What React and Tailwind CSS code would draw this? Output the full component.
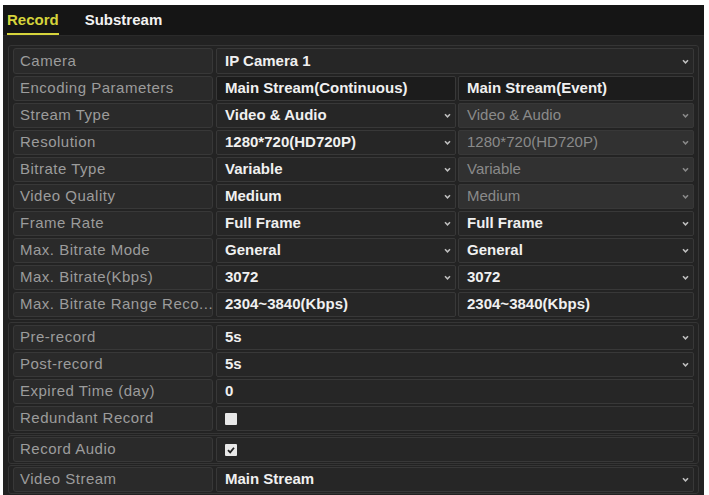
const Chevron = ({ dim }) => (
  <svg width="7" height="5" viewBox="0 0 7 5" className="shrink-0">
    <path d="M1 1.2 L3.5 3.8 L6 1.2" fill="none" stroke={dim ? "#8a8a8a" : "#c0c0c0"} strokeWidth="1.5" />
  </svg>
);

const Label = ({ children }) => (
  <div className="w-[200px] shrink-0 h-full flex items-center px-[6px] bg-[#2a2a2a] border border-[#383838] rounded-[3px] text-[15px] tracking-[0.5px] text-[#9c9c9c] whitespace-nowrap overflow-hidden">
    {children}
  </div>
);

const Value = ({ children, arrow, dim, dark, className = "" }) => (
  <div
    className={`h-full flex items-center justify-between pl-[8px] pr-[4px] border border-[#383838] rounded-[2px] text-[15px] whitespace-nowrap ${
      dim ? "bg-[#313131] text-[#8a8a8a]" : dark ? "bg-[#1c1c1c] text-[#f0f0f0] font-bold" : "bg-[#262626] text-[#f0f0f0] font-bold"
    } ${className}`}
  >
    <span>{children}</span>
    {arrow && <Chevron dim={dim} />}
  </div>
);

const Row = ({ label, children, tall }) => (
  <div className={`${tall ? "h-[28px]" : "h-[27px]"} flex gap-[3px] py-[1px]`}>
    <Label>{label}</Label>
    {children}
  </div>
);

const Pair = ({ label, a, b, arrow = true, dimB, dark }) => (
  <Row label={label}>
    <Value className="w-[240px]" arrow={arrow} dark={dark}>{a}</Value>
    <Value className="flex-1 -ml-[1px]" arrow={arrow} dim={dimB} dark={dark}>{b}</Value>
  </Row>
);

const Group = ({ children, tight }) => (
  <div className={`mx-[5px] border border-[#353535] rounded-[3px] px-[4px] ${tight ? "" : "py-[1px]"} bg-[#232323]`}>
    {children}
  </div>
);

const Checkbox = ({ checked }) => (
  <div className="w-[12px] h-[12px] bg-[#e8e8e8] rounded-[1px] flex items-center justify-center">
    {checked && (
      <svg width="10" height="10" viewBox="0 0 10 10">
        <path d="M2 5.2 L4.2 7.4 L8 2.8" fill="none" stroke="#222" strokeWidth="1.8" />
      </svg>
    )}
  </div>
);

export default function App() {
  return (
    <div className="w-[709px] h-[495px] bg-white pt-[5px] pl-[3px] pr-[5px] overflow-hidden font-['Liberation_Sans',Arial,sans-serif]">
      <div className="h-full bg-[#222] flex flex-col">
        <div className="h-[31px] shrink-0 bg-[#151515] flex items-end gap-[26px] px-[4px] text-[15px] font-bold border-b border-[#2a2a2a]">
          <div className="text-[#d6d43c] border-b-2 border-[#d6d43c] pb-[3px] leading-[20px]">Record</div>
          <div className="text-[#f2f2f2] pb-[5px] leading-[20px]">Substream</div>
        </div>
        <div className="pt-[9px] flex flex-col">
          <Group>
            <Row label="Camera" tall>
              <Value className="flex-1" arrow>IP Camera 1</Value>
            </Row>
            <Pair label="Encoding Parameters" a="Main Stream(Continuous)" b="Main Stream(Event)" arrow={false} dark />
            <Pair label="Stream Type" a="Video & Audio" b="Video & Audio" dimB />
            <Pair label="Resolution" a="1280*720(HD720P)" b="1280*720(HD720P)" dimB />
            <Pair label="Bitrate Type" a="Variable" b="Variable" dimB />
            <Pair label="Video Quality" a="Medium" b="Medium" dimB />
            <Pair label="Frame Rate" a="Full Frame" b="Full Frame" />
            <Pair label="Max. Bitrate Mode" a="General" b="General" />
            <Pair label="Max. Bitrate(Kbps)" a="3072" b="3072" />
            <Pair label="Max. Bitrate Range Reco..." a="2304~3840(Kbps)" b="2304~3840(Kbps)" arrow={false} />
          </Group>
          <div className="h-[2px]" />
          <Group>
            <Row label="Pre-record">
              <Value className="flex-1" arrow>5s</Value>
            </Row>
            <Row label="Post-record">
              <Value className="flex-1" arrow>5s</Value>
            </Row>
            <Row label="Expired Time (day)">
              <Value className="flex-1">0</Value>
            </Row>
            <Row label="Redundant Record">
              <Value className="flex-1">
                <Checkbox />
              </Value>
            </Row>
          </Group>
          <div className="h-[1px]" />
          <Group tight>
            <Row label="Record Audio">
              <Value className="flex-1">
                <Checkbox checked />
              </Value>
            </Row>
          </Group>
          <div className="h-[1px]" />
          <Group tight>
            <Row label="Video Stream">
              <Value className="flex-1" arrow>Main Stream</Value>
            </Row>
          </Group>
        </div>
      </div>
    </div>
  );
}
